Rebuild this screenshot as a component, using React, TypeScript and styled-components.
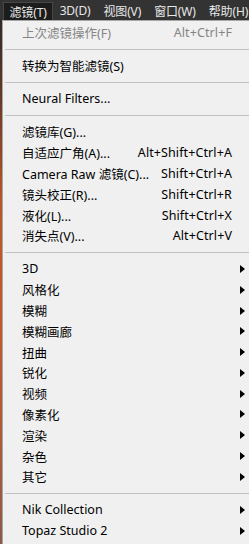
import React from "react";
import styled, { createGlobalStyle } from "styled-components";

const Global = createGlobalStyle`
  html, body { margin: 0; padding: 0; background: #2b2b2b; }
  body { width: 249px; height: 544px; overflow: hidden; }
`;

const FONT = `"Noto Sans", "Noto Sans CJK SC", sans-serif`;

const Page = styled.div`
  width: 249px;
  height: 544px;
  display: flex;
  flex-direction: column;
  overflow: hidden;
  font-family: ${FONT};
`;

const MenuBar = styled.div`
  height: 20px;
  flex: none;
  display: flex;
  align-items: stretch;
  background: #333333;
  padding-left: 3px;
`;

const BarItem = styled.div<{ $active?: boolean }>`
  display: flex;
  align-items: center;
  padding: 0 5.5px;
  margin-top: ${(p) => (p.$active ? "2px" : "0")};
  font-size: 12px;
  letter-spacing: -0.15px;
  color: #e8e8e8;
  white-space: nowrap;
  background: ${(p) => (p.$active ? "#1c1c1c" : "transparent")};
  border: ${(p) => (p.$active ? "1px solid #474747" : "1px solid transparent")};
  border-bottom: none;
  box-sizing: border-box;
`;

const Body = styled.div`
  flex: 1;
  display: flex;
  min-height: 0;
`;

const Backdrop = styled.div`
  width: 2px;
  flex: none;
  background: linear-gradient(
    to bottom,
    #2e2a28 0px,
    #5a3526 60px,
    #b8552a 180px,
    #c4582c 300px,
    #a85a3c 440px,
    #8a5a48 524px
  );
`;

const Panel = styled.div`
  flex: 1;
  background: #f0f0f0;
  border-left: 1px solid #a7a7a7;
  border-top: 1px solid #a7a7a7;
  padding-top: 1.6px;
  display: flex;
  flex-direction: column;
`;

const Row = styled.div<{ $disabled?: boolean }>`
  height: 20.8px;
  flex: none;
  display: flex;
  align-items: center;
  padding-left: 19px;
  font-size: 12.5px;
  color: ${(p) => (p.$disabled ? "#858585" : "#000000")};
  white-space: nowrap;
`;

const Label = styled.span`
  flex: 1;
`;

const Shortcut = styled.span`
  flex: none;
  letter-spacing: 0.1px;
`;

const Trail = styled.span`
  width: 17px;
  flex: none;
  display: flex;
  align-items: center;
  padding-left: 8px;
  box-sizing: border-box;
`;

const Arrow = styled.span`
  width: 0;
  height: 0;
  border-top: 4.5px solid transparent;
  border-bottom: 4.5px solid transparent;
  border-left: 5px solid #000;
`;

const Separator = styled.div`
  height: 12.2px;
  flex: none;
  display: flex;
  align-items: center;
  padding-left: 2px;
  &::after {
    content: "";
    flex: 1;
    height: 1px;
    background: #c2c2c2;
  }
`;

type Item =
  | { sep: true }
  | { label: string; shortcut?: string; sub?: boolean; disabled?: boolean };

const items: Item[] = [
  { label: "上次滤镜操作(F)", shortcut: "Alt+Ctrl+F", disabled: true },
  { sep: true },
  { label: "转换为智能滤镜(S)" },
  { sep: true },
  { label: "Neural Filters..." },
  { sep: true },
  { label: "滤镜库(G)..." },
  { label: "自适应广角(A)...", shortcut: "Alt+Shift+Ctrl+A" },
  { label: "Camera Raw 滤镜(C)...", shortcut: "Shift+Ctrl+A" },
  { label: "镜头校正(R)...", shortcut: "Shift+Ctrl+R" },
  { label: "液化(L)...", shortcut: "Shift+Ctrl+X" },
  { label: "消失点(V)...", shortcut: "Alt+Ctrl+V" },
  { sep: true },
  { label: "3D", sub: true },
  { label: "风格化", sub: true },
  { label: "模糊", sub: true },
  { label: "模糊画廊", sub: true },
  { label: "扭曲", sub: true },
  { label: "锐化", sub: true },
  { label: "视频", sub: true },
  { label: "像素化", sub: true },
  { label: "渲染", sub: true },
  { label: "杂色", sub: true },
  { label: "其它", sub: true },
  { sep: true },
  { label: "Nik Collection", sub: true },
  { label: "Topaz Studio 2", sub: true },
];

const bar = ["滤镜(T)", "3D(D)", "视图(V)", "窗口(W)", "帮助(H)"];

export default function App() {
  return (
    <>
      <Global />
      <Page>
        <MenuBar>
          {bar.map((b, i) => (
            <BarItem key={b} $active={i === 0}>
              {b}
            </BarItem>
          ))}
        </MenuBar>
        <Body>
          <Backdrop />
          <Panel>
            {items.map((it, i) =>
              "sep" in it ? (
                <Separator key={i} />
              ) : (
                <Row key={i} $disabled={it.disabled}>
                  <Label>{it.label}</Label>
                  {it.shortcut && <Shortcut>{it.shortcut}</Shortcut>}
                  <Trail>{it.sub && <Arrow />}</Trail>
                </Row>
              )
            )}
          </Panel>
        </Body>
      </Page>
    </>
  );
}
